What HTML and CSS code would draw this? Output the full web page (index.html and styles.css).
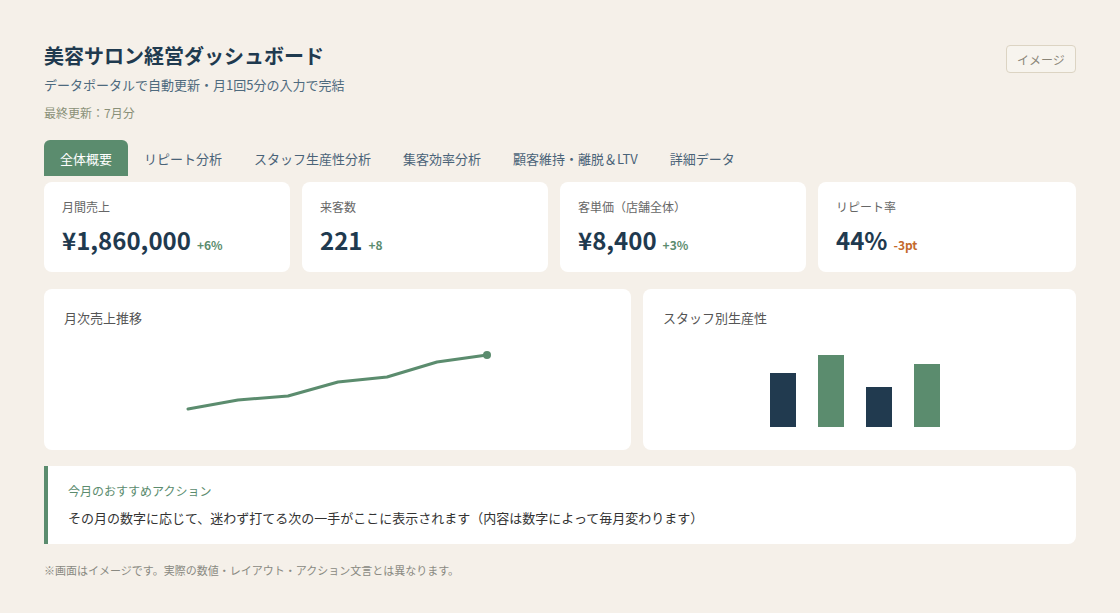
FILE: index.html
```html
<!DOCTYPE html>
<html lang="ja">
<head>
<meta charset="utf-8">
<title>美容サロン経営ダッシュボード</title>
<link rel="stylesheet" href="styles.css">
</head>
<body>
<div class="page">
  <header class="header">
    <div class="header-text">
      <h1 class="title">美容サロン経営ダッシュボード</h1>
      <p class="subtitle">データポータルで自動更新・月1回5分の入力で完結</p>
      <p class="updated">最終更新：7月分</p>
    </div>
    <span class="badge">イメージ</span>
  </header>

  <nav class="tabs">
    <span class="tab active">全体概要</span>
    <span class="tab">リピート分析</span>
    <span class="tab">スタッフ生産性分析</span>
    <span class="tab">集客効率分析</span>
    <span class="tab">顧客維持・離脱＆LTV</span>
    <span class="tab">詳細データ</span>
  </nav>

  <section class="kpis">
    <div class="card kpi">
      <div class="kpi-label">月間売上</div>
      <div class="kpi-value">¥1,860,000<span class="delta up">+6%</span></div>
    </div>
    <div class="card kpi">
      <div class="kpi-label">来客数</div>
      <div class="kpi-value">221<span class="delta up">+8</span></div>
    </div>
    <div class="card kpi">
      <div class="kpi-label">客単価（店舗全体）</div>
      <div class="kpi-value">¥8,400<span class="delta up">+3%</span></div>
    </div>
    <div class="card kpi">
      <div class="kpi-label">リピート率</div>
      <div class="kpi-value">44%<span class="delta down">-3pt</span></div>
    </div>
  </section>

  <section class="charts">
    <div class="card chart">
      <div class="chart-title">月次売上推移</div>
      <svg class="line-chart" width="310" height="100" viewBox="0 0 310 100">
        <polyline points="5,74 55,65 105,61 155,47 204,42 254,27 304,20" fill="none" stroke="#5b8c6e" stroke-width="3" stroke-linejoin="round" stroke-linecap="round"/>
        <circle cx="304" cy="20" r="4" fill="#5b8c6e"/>
      </svg>
    </div>
    <div class="card chart">
      <div class="chart-title">スタッフ別生産性</div>
      <svg class="bar-chart" width="180" height="100" viewBox="0 0 180 100">
        <rect x="0" y="38" width="26" height="54" fill="#213a4f"/>
        <rect x="48" y="20" width="26" height="72" fill="#5b8c6e"/>
        <rect x="96" y="52" width="26" height="40" fill="#213a4f"/>
        <rect x="144" y="29" width="26" height="63" fill="#5b8c6e"/>
      </svg>
    </div>
  </section>

  <section class="action">
    <div class="action-title">今月のおすすめアクション</div>
    <div class="action-body">その月の数字に応じて、迷わず打てる次の一手がここに表示されます（内容は数字によって毎月変わります）</div>
  </section>

  <p class="note">※画面はイメージです。実際の数値・レイアウト・アクション文言とは異なります。</p>
</div>
</body>
</html>
```

FILE: styles.css
```css
* { box-sizing: border-box; }

html, body {
  margin: 0;
  padding: 0;
  background: #f5f0e9;
}

body {
  font-family: "Noto Sans CJK JP", "Noto Sans", sans-serif;
  color: #213a4f;
}

.page {
  padding: 42px 44px 0 44px;
}

.header {
  display: flex;
  justify-content: space-between;
  align-items: flex-start;
}

.title {
  margin: 0;
  font-size: 20px;
  line-height: 28px;
  font-weight: 700;
  color: #1f3a4f;
}

.subtitle {
  margin: 5px 0 0;
  font-size: 13px;
  line-height: 20px;
  color: #4e6a7e;
}

.updated {
  margin: 9px 0 0;
  font-size: 12px;
  line-height: 18px;
  color: #8a9078;
}

.badge {
  margin-top: 3px;
  width: 70px;
  height: 28px;
  display: flex;
  align-items: center;
  justify-content: center;
  font-size: 12px;
  color: #8a8577;
  border: 1px solid #dcd4c3;
  border-radius: 4px;
  background: #f7f4ee;
}

.tabs {
  display: flex;
  margin-top: 18px;
}

.tab {
  height: 36px;
  padding: 0 16px;
  display: flex;
  align-items: center;
  font-size: 13px;
  color: #4a6378;
  border-radius: 6px 6px 0 0;
}

.tab.active {
  background: #5b8c6e;
  color: #ffffff;
}

.card {
  background: #ffffff;
  border-radius: 8px;
}

.kpis {
  display: grid;
  grid-template-columns: 246fr 246fr 246fr 258fr;
  gap: 12px;
  margin-top: 6px;
}

.kpi {
  height: 90px;
  padding: 16px 18px 15px;
}

.kpi-label {
  font-size: 12px;
  line-height: 18px;
  color: #666666;
}

.kpi-value {
  margin-top: 8px;
  font-size: 24px;
  line-height: 32px;
  font-weight: 700;
  color: #1f3a4f;
  display: flex;
  align-items: baseline;
}

.delta {
  margin-left: 6px;
  font-size: 12px;
  font-weight: 700;
}

.delta.up { color: #5b8c6e; }
.delta.down { color: #c4692c; }

.charts {
  display: grid;
  grid-template-columns: 587fr 433fr;
  gap: 12px;
  margin-top: 17px;
}

.chart {
  height: 161px;
  padding: 20px 20px 15px;
  display: flex;
  flex-direction: column;
}

.chart-title {
  font-size: 13px;
  line-height: 18px;
  color: #555555;
}

.line-chart,
.bar-chart {
  display: block;
  margin: 8px auto 0;
}

.action {
  margin-top: 16px;
  height: 78px;
  background: #ffffff;
  border-left: 4px solid #5b8c6e;
  border-radius: 0 8px 8px 0;
  padding: 16px 20px 15px;
}

.action-title {
  font-size: 12px;
  line-height: 18px;
  color: #5b8c6e;
}

.action-body {
  margin-top: 7px;
  font-size: 13px;
  line-height: 22px;
  color: #333333;
}

.note {
  margin: 18px 0 0;
  font-size: 11px;
  line-height: 16px;
  color: #8a8a82;
}
```
